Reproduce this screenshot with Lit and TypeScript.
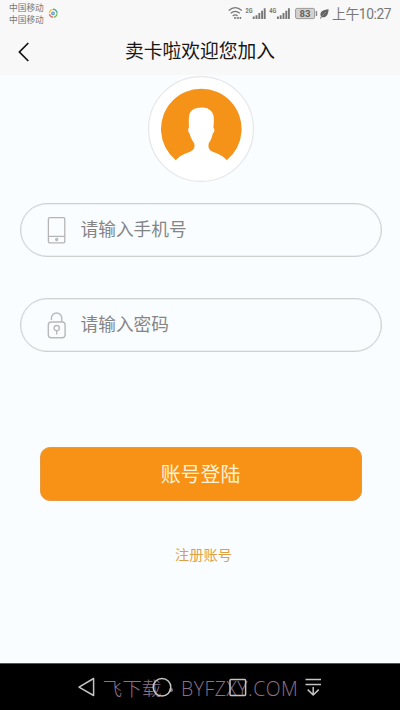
import { LitElement, html, css, svg } from "lit";
import { customElement } from "lit/decorators.js";

const signal = svg`<path d="M1.2 12V9.6M4 12V8.2M6.8 12V6M9.6 12V3.8M12.2 12V1.2" stroke="#777" stroke-width="1.9"/>`;

@customElement("app-root")
export class AppRoot extends LitElement {
  static styles = css`
    :host {
      display: flex;
      flex-direction: column;
      width: 400px;
      height: 710px;
      overflow: hidden;
      background: #fafdff;
      font-family: Roboto, "Noto Sans CJK SC", sans-serif;
    }
    * { box-sizing: border-box; }
    svg { display: block; flex: none; }
    .top { height: 75px; flex: none; background: #f8f8f8; }
    .status { height: 27px; display: flex; align-items: flex-start; padding-left: 9px; color: #777; }
    .carriers { font-size: 8.7px; line-height: 12px; padding-top: 2px; white-space: nowrap; }
    .ball { margin: 8px 0 0 4px; }
    .icons { margin: 6px 0 0 auto; width: 102px; }
    .clock { width: 70px; padding-left: 2px; font-size: 13.8px; letter-spacing: -.4px; line-height: 29px; white-space: nowrap; }
    .bar { height: 48px; display: grid; grid-template-columns: 50px 300px 50px; align-items: center; }
    .back { margin-left: 17px; }
    .title { text-align: center; font-size: 18.8px; line-height: 48px; padding-top: 1px; color: #161616; }
    .main { flex: 1; display: flex; flex-direction: column; align-items: center; }
    .avatar { margin: 1px 0 0 2px; }
    .field {
      width: 362px; height: 54px; margin-left: 1px; border: 1px solid #cfd1d1;
      border-radius: 27px; display: flex; align-items: center; padding-left: 26px;
      box-shadow: inset 0 0 0 .5px #e0e2e2;
      color: #858585; font-size: 17.7px; line-height: 50px;
    }
    .phone { margin-top: 21px; }
    .pass { margin-top: 41px; }
    .field .label { margin-left: 14px; }
    .login {
      width: 322px; height: 54px; margin: 95px 0 0 1px; border-radius: 10px; background: #f79216;
      border: 1px solid #e59a3e; color: #fff3d6; font-size: 19.9px; line-height: 55px; text-align: center;
    }
    .register { margin: 43px 0 0 7px; color: #dda044; font-size: 14.2px; line-height: 22px; }
    .nav { position: relative; height: 47px; flex: none; background: #000; border-top: 1px solid #555; }
    .mark {
      position: absolute; left: 102.5px; top: 11px; display: flex; white-space: nowrap;
      color: #8b7189; font-size: 19.7px; line-height: 29px; font-weight: 300;
    }
    .mark .dot { width: 19.5px; display: flex; align-items: center; padding-left: 7px; }
    .mark .dot::before { content: ""; width: 4px; height: 4px; border-radius: 50%; background: #8b7189; }
    .mark .site { font-family: "Open Sans", "Noto Sans", sans-serif; font-size: 19.4px; line-height: 27px; letter-spacing: .5px; }
    .keys { position: absolute; left: 0; top: 0; }
  `;

  render() {
    return html`
      <header class="top">
        <div class="status">
          <div class="carriers"><div>中国移动</div><div>中国移动</div></div>
          <svg class="ball" width="10" height="11" viewBox="0 0 10 11" fill="none" stroke-width="1.4">
            <path d="M1.4 5A4 4 0 0 1 4.5 1.4" stroke="#e8c44b"/>
            <path d="M5 1.3A4 4 0 0 1 9 5.5" stroke="#55ad91"/>
            <path d="M9 6A4 4 0 0 1 5.8 9.3" stroke="#80bd60"/>
            <path d="M5 9.3A4 4 0 0 1 1.4 6.2" stroke="#df756c"/>
            <circle cx="5" cy="5.4" r="1.2" stroke="#679fc8"/>
          </svg>
          <svg class="icons" width="102" height="15" viewBox="0 0 102 15" fill="none">
            <g stroke="#777" stroke-width="1.3">
              <path d="M.7 4.4Q7.2-1.1 13.8 4.4M2.7 7.3Q7.2 3.4 11.8 7.3M4.7 10Q7.2 7.8 9.6 10"/>
            </g>
            <path d="M6 12h2.4M10 11v2M12.4 11v2" stroke="#777" stroke-width="1.5"/>
            <text x="17.6" y="6.8" font-size="7.6" font-weight="700" fill="#777" textLength="7" lengthAdjust="spacingAndGlyphs">2G</text>
            <g transform="translate(24.5 1)">${signal}</g>
            <text x="41.3" y="6.8" font-size="7.6" font-weight="700" fill="#777" textLength="7" lengthAdjust="spacingAndGlyphs">4G</text>
            <g transform="translate(48.7 1)">${signal}</g>
            <rect x="67.6" y="2.4" width="19" height="10.2" rx="1.3" fill="#d2d2d2" stroke="#999"/>
            <path d="M88.5 5v5" stroke="#888" stroke-width="1.4"/>
            <text x="77" y="11" text-anchor="middle" font-size="9.6" font-weight="700" fill="#646464">83</text>
            <path d="M92 12.5L93 10.6C91 6 95 3.5 100.6 3.2C100.5 9 97.5 12.5 93.8 11L92.8 12.7Z" fill="#656565"/>
            <path d="M93.3 10.7L98 6" stroke="#aaa" stroke-width=".6"/>
          </svg>
          <div class="clock">上午10:27</div>
        </div>
        <div class="bar">
          <svg class="back" width="14" height="22" viewBox="0 0 14 22" fill="none" stroke="#111" stroke-width="1.7">
            <path d="M11.3 2L2.4 11L11.3 20"/>
          </svg>
          <div class="title">卖卡啦欢迎您加入</div>
        </div>
      </header>
      <main class="main">
        <svg class="avatar" width="106" height="106" viewBox="0 0 106 106">
          <circle cx="53" cy="53" r="52.4" fill="#fff" stroke="#e6e7e8" stroke-width="1.2"/>
          <path d="M27.8 84.2A40.3 40.3 0 1 1 78.8 84.2C74.5 79.5 69 77.5 64.2 75.6C60.2 73.8 60 70 60.8 67.2C63.2 64 64.2 60.5 64.8 57.6C66.6 56 67 53 65.4 51.5C66 46 66.6 38.5 63.6 35.8C60 31 55 31.3 52 31.7C47 31.8 43.5 33.5 41.7 37.5C40.5 41 40.8 46 41 51.5C39.6 53 40 56 41.6 57.6C42.2 60.5 43.8 64 46.2 67.2C47 70 46.6 73.8 42.6 75.6C37.8 77.5 32.1 79.5 27.8 84.2Z" fill="#f59218"/>
        </svg>
        <div class="field phone">
          <svg width="20" height="28" viewBox="0 0 20 28" fill="none" stroke="#b5b5b5" stroke-width="1.3">
            <rect x="1.4" y="1.6" width="16.4" height="25.2" rx="1.3"/>
            <path d="M1.4 20.4H17.8"/>
            <circle cx="9.7" cy="23.5" r="1"/>
          </svg>
          <span class="label">请输入手机号</span>
        </div>
        <div class="field pass">
          <svg width="20" height="28" viewBox="0 0 20 28" fill="none" stroke="#b8b9b9" stroke-width="1.4">
            <rect x="1.3" y="11" width="16.8" height="15.8" rx="3"/>
            <path d="M4.4 9V7.2A5.2 5.2 0 0 1 14.8 7.2V11"/>
            <circle cx="9.7" cy="17.1" r="2.6"/>
            <path d="M9.7 19.7V23.6"/>
          </svg>
          <span class="label">请输入密码</span>
        </div>
        <div class="login">账号登陆</div>
        <div class="register">注册账号</div>
      </main>
      <footer class="nav">
        <div class="mark"><span>飞下载</span><span class="dot"></span><span class="site">BYFZXY.COM</span></div>
        <svg class="keys" width="400" height="46" viewBox="0 0 400 46" fill="none" stroke="#c4c4c4" stroke-width="1.5" stroke-linejoin="round">
          <path d="M93.6 14.5V31.5L79 23.2Z"/>
          <circle cx="162" cy="23.2" r="8.8"/>
          <rect x="230" y="15.6" width="15.6" height="15.8" rx="1"/>
          <path d="M305.5 15.5H321M305.5 20.5H321M313.2 23V30.8M307.7 25.6L313.2 31L318.7 25.6"/>
        </svg>
      </footer>
    `;
  }
}
